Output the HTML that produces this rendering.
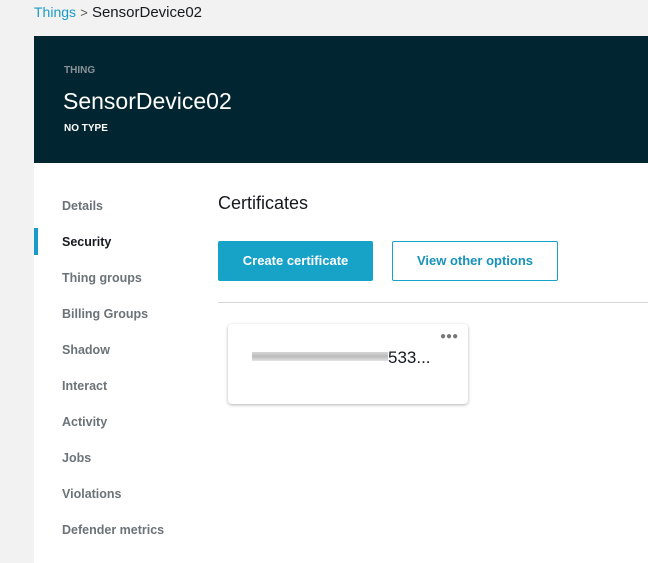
<!DOCTYPE html>
<html><head><style>
body{margin:0;width:648px;height:562px;background:#f2f2f2;font-family:"Liberation Sans",sans-serif;position:relative;overflow:hidden}
.a{position:absolute}
.nav{position:absolute;left:62px;font-size:12.5px;color:#6b7378;font-weight:bold;line-height:16px}
</style></head><body>
<div class="a" style="left:34px;top:3px;font-size:15px;line-height:18px;color:#16191f"><span style="color:#1a9bc7;font-size:14px">Things</span> <span style="color:#555;font-size:13px">&gt;</span> SensorDevice02</div>
<div class="a" style="left:34px;top:36px;width:614px;height:127px;background:#022631"></div>
<div class="a" style="left:64px;top:65px;font-size:10px;font-weight:bold;color:#8a9299">THING</div>
<div class="a" style="left:63px;top:88px;font-size:23px;color:#fff">SensorDevice02</div>
<div class="a" style="left:64px;top:123px;font-size:10px;font-weight:bold;color:#fff">NO TYPE</div>
<div class="a" style="left:34px;top:163px;width:614px;height:400px;background:#fff"></div>
<div class="a" style="left:34px;top:228px;width:4px;height:27px;background:#1a9bc7"></div>
<div class="nav" style="top:198px">Details</div>
<div class="nav" style="top:234px;color:#16191f">Security</div>
<div class="nav" style="top:270px">Thing groups</div>
<div class="nav" style="top:306px">Billing Groups</div>
<div class="nav" style="top:342px">Shadow</div>
<div class="nav" style="top:378px">Interact</div>
<div class="nav" style="top:414px">Activity</div>
<div class="nav" style="top:450px">Jobs</div>
<div class="nav" style="top:486px">Violations</div>
<div class="nav" style="top:522px">Defender metrics</div>
<div class="a" style="left:218px;top:193px;font-size:18px;color:#16191f">Certificates</div>
<div class="a" style="left:218px;top:241px;width:155px;height:40px;background:#17a2c8;border-radius:2px;color:#fff;font-weight:bold;font-size:13px;line-height:40px;text-align:center">Create certificate</div>
<div class="a" style="left:392px;top:241px;width:164px;height:38px;border:1px solid #17a2c8;border-radius:2px;color:#1792bb;font-weight:bold;font-size:13px;line-height:38px;text-align:center">View other options</div>
<div class="a" style="left:218px;top:302px;width:430px;height:1px;background:#d5d5d5"></div>
<div class="a" style="left:228px;top:324px;width:240px;height:80px;background:#fff;border-radius:4px;box-shadow:0 1px 3px rgba(0,0,0,.3)"></div>
<div class="a" style="left:440px;top:333px;font-size:10px;color:#777;letter-spacing:0px;line-height:8px">●●●</div>
<div class="a" style="left:252px;top:352px;width:136px;height:9px;background:linear-gradient(#ccc,#aaa,#ddd);opacity:.8"></div>
<div class="a" style="left:388px;top:348px;font-size:17px;color:#16191f">533...</div>
</body></html>
